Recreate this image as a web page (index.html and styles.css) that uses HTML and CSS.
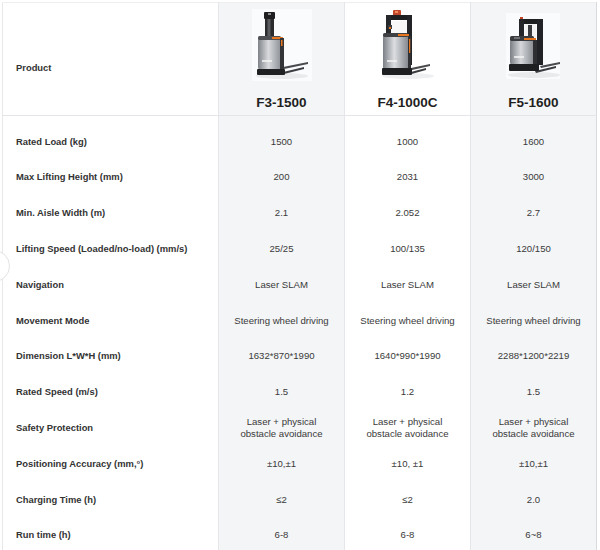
FILE: index.html
```html
<!DOCTYPE html>
<html lang="en">
<head>
<meta charset="utf-8">
<title>Product comparison</title>
<link rel="stylesheet" href="styles.css">
</head>
<body>
<div class="page">
  <span class="nav-circle" aria-hidden="true"></span>
  <table class="spec">
    <colgroup>
      <col class="c-label">
      <col class="c-prod">
      <col class="c-prod">
      <col class="c-last">
    </colgroup>
    <thead>
      <tr>
        <th class="label head-label">Product</th>
        <th class="prod alt">
          <div class="pic">
            <svg width="60" height="72" viewBox="0 0 60 72">
              <defs>
                <linearGradient id="s1" x1="0" x2="1" y1="0" y2="0">
                  <stop offset="0" stop-color="#7f8389"/>
                  <stop offset="0.45" stop-color="#d8dadd"/>
                  <stop offset="1" stop-color="#8c9096"/>
                </linearGradient>
              </defs>
              <rect width="60" height="72" fill="#fafbfc"/>
              <ellipse cx="30" cy="67" rx="26" ry="3" fill="#e9eaec"/>
              <rect x="13" y="6" width="9" height="26" fill="#2b2b2d"/>
              <rect x="15.5" y="9" width="3" height="20" fill="#5a5c60"/>
              <rect x="12" y="3" width="11" height="7" rx="1" fill="#1f1f21"/>
              <rect x="16" y="4" width="3" height="2" fill="#8a8c90"/>
              <path d="M31 58 L56 53 L56 55 L32 60 Z" fill="#4a4b4e"/>
              <path d="M27 64 L52 58 L52 60 L28 66 Z" fill="#3b3c3f"/>
              <rect x="6" y="29" width="23" height="32" rx="3" fill="url(#s1)"/>
              <rect x="6" y="27" width="23" height="4" rx="1.5" fill="#4d4f53"/>
              <rect x="20" y="28" width="11" height="2" fill="#e8761f"/>
              <rect x="28" y="29" width="4" height="32" fill="#333437"/>
              <rect x="29" y="31" width="1.5" height="6" fill="#e8761f"/>
              <rect x="10" y="51" width="10" height="2" fill="#f2f2f2" opacity="0.8"/>
              <rect x="5" y="60" width="28" height="6" rx="1" fill="#1f2022"/>
            </svg>
          </div>
          <div class="model">F3-1500</div>
        </th>
        <th class="prod">
          <div class="pic">
            <svg width="60" height="72" viewBox="0 0 60 72">
              <defs>
                <linearGradient id="s2" x1="0" x2="1" y1="0" y2="0">
                  <stop offset="0" stop-color="#7c8086"/>
                  <stop offset="0.45" stop-color="#dcdee1"/>
                  <stop offset="1" stop-color="#868a90"/>
                </linearGradient>
              </defs>
              <ellipse cx="30" cy="67" rx="26" ry="3" fill="#eeeff1"/>
              <rect x="15" y="1" width="8" height="6" rx="1" fill="#c2462a"/>
              <rect x="17" y="2" width="3" height="2" fill="#f08a5d"/>
              <rect x="8" y="6" width="25" height="5" fill="#1e1f21"/>
              <rect x="8" y="6" width="5" height="24" fill="#26272a"/>
              <rect x="29" y="6" width="5" height="50" fill="#232427"/>
              <rect x="13" y="12" width="16" height="12" fill="#f7f7f8"/>
              <rect x="10" y="16" width="4" height="4" fill="#3a3b3e"/>
              <rect x="11" y="18" width="2" height="2" fill="#e8761f"/>
              <path d="M33 59 L52 55 L52 57 L34 61 Z" fill="#4a4b4e"/>
              <path d="M29 64 L48 59 L48 61 L30 66 Z" fill="#3b3c3f"/>
              <rect x="5" y="26" width="25" height="35" rx="3" fill="url(#s2)"/>
              <rect x="5" y="24" width="25" height="4" rx="1.5" fill="#3f4044"/>
              <rect x="20" y="25" width="11" height="2" fill="#e8761f"/>
              <rect x="30" y="27" width="3" height="32" fill="#303134"/>
              <rect x="31" y="30" width="1.2" height="14" fill="#e8761f"/>
              <rect x="9" y="51" width="10" height="2" fill="#f2f2f2" opacity="0.8"/>
              <rect x="4" y="59" width="30" height="7" rx="1" fill="#1e1f21"/>
            </svg>
          </div>
          <div class="model">F4-1000C</div>
        </th>
        <th class="prod alt last">
          <div class="pic">
            <svg width="60" height="72" viewBox="0 0 60 72">
              <defs>
                <linearGradient id="s3" x1="0" x2="1" y1="0" y2="0">
                  <stop offset="0" stop-color="#7b7f85"/>
                  <stop offset="0.45" stop-color="#d6d8db"/>
                  <stop offset="1" stop-color="#85898f"/>
                </linearGradient>
              </defs>
              <rect x="2" y="4" width="54" height="66" fill="#fafbfc"/>
              <ellipse cx="30" cy="66" rx="26" ry="3" fill="#e9eaec"/>
              <rect x="15" y="10" width="24" height="5" fill="#1e1f21"/>
              <rect x="15" y="10" width="5" height="20" fill="#252629"/>
              <rect x="33" y="10" width="6" height="46" fill="#222326"/>
              <rect x="21" y="15" width="11" height="14" fill="#f4f4f5"/>
              <rect x="24" y="16" width="4" height="12" fill="#3a3b3e"/>
              <rect x="16" y="8" width="3" height="2" fill="#c2462a"/>
              <path d="M36 57 L56 53 L56 55 L37 59 Z" fill="#4a4b4e"/>
              <path d="M31 62 L52 57 L52 59 L32 64 Z" fill="#3b3c3f"/>
              <rect x="6" y="30" width="24" height="26" rx="3" fill="url(#s3)"/>
              <rect x="6" y="27" width="24" height="5" rx="1.5" fill="#3a3b3f"/>
              <rect x="10" y="28" width="6" height="2" fill="#6d6f73"/>
              <rect x="20" y="29" width="12" height="2" fill="#e8761f"/>
              <rect x="29" y="31" width="4" height="25" fill="#2e2f32"/>
              <rect x="10" y="47" width="10" height="2" fill="#f2f2f2" opacity="0.8"/>
              <rect x="5" y="55" width="30" height="7" rx="1" fill="#1e1f21"/>
            </svg>
          </div>
          <div class="model">F5-1600</div>
        </th>
      </tr>
    </thead>
    <tbody>
      <tr class="first">
        <td class="label">Rated Load (kg)</td>
        <td class="alt">1500</td><td>1000</td><td class="alt last">1600</td>
      </tr>
      <tr>
        <td class="label">Max Lifting Height (mm)</td>
        <td class="alt">200</td><td>2031</td><td class="alt last">3000</td>
      </tr>
      <tr>
        <td class="label">Min. Aisle Width (m)</td>
        <td class="alt">2.1</td><td>2.052</td><td class="alt last">2.7</td>
      </tr>
      <tr>
        <td class="label">Lifting Speed (Loaded/no-load) (mm/s)</td>
        <td class="alt">25/25</td><td>100/135</td><td class="alt last">120/150</td>
      </tr>
      <tr>
        <td class="label">Navigation</td>
        <td class="alt">Laser SLAM</td><td>Laser SLAM</td><td class="alt last">Laser SLAM</td>
      </tr>
      <tr>
        <td class="label">Movement Mode</td>
        <td class="alt">Steering wheel driving</td><td>Steering wheel driving</td><td class="alt last">Steering wheel driving</td>
      </tr>
      <tr>
        <td class="label">Dimension L*W*H (mm)</td>
        <td class="alt">1632*870*1990</td><td>1640*990*1990</td><td class="alt last">2288*1200*2219</td>
      </tr>
      <tr>
        <td class="label">Rated Speed (m/s)</td>
        <td class="alt">1.5</td><td>1.2</td><td class="alt last">1.5</td>
      </tr>
      <tr>
        <td class="label">Safety Protection</td>
        <td class="alt">Laser + physical<br>obstacle avoidance</td><td>Laser + physical<br>obstacle avoidance</td><td class="alt last">Laser + physical<br>obstacle avoidance</td>
      </tr>
      <tr>
        <td class="label">Positioning Accuracy (mm,°)</td>
        <td class="alt">±10,±1</td><td>±10, ±1</td><td class="alt last">±10,±1</td>
      </tr>
      <tr>
        <td class="label">Charging Time (h)</td>
        <td class="alt">≤2</td><td>≤2</td><td class="alt last">2.0</td>
      </tr>
      <tr>
        <td class="label">Run time (h)</td>
        <td class="alt">6-8</td><td>6-8</td><td class="alt last">6~8</td>
      </tr>
    </tbody>
  </table>
</div>
</body>
</html>
```
FILE: styles.css
```css
html, body {
  margin: 0;
  padding: 0;
  background: #ffffff;
}

.page {
  position: relative;
  padding: 2px 0 0 2px;
  font-family: "Liberation Sans", Arial, sans-serif;
  color: #3a3a3a;
  overflow: hidden;
  height: 548px;
}

.nav-circle {
  position: absolute;
  left: -22px;
  top: 250px;
  width: 30px;
  height: 30px;
  border: 1px solid #e2e3e5;
  border-radius: 50%;
  background: #ffffff;
  z-index: 2;
}

.spec {
  border-collapse: collapse;
  table-layout: fixed;
  width: 594px;
  border-top: 1px solid #eceef0;
  border-left: 1px solid #e6e8ea;
}

.c-label { width: 216px; }
.c-prod { width: 126px; }
.c-last { width: 126px; }

.spec th,
.spec td {
  border-left: 1px solid #e4e6e9;
  padding: 0 4px;
  text-align: center;
  vertical-align: middle;
  font-size: 9.6px;
  line-height: 11.5px;
  font-weight: normal;
  color: #3a3a3a;
}

.spec .last {
  border-right: 1px solid #d9dbde;
}

.spec .alt {
  background: #f4f5f7;
}

.spec .label {
  text-align: left;
  padding-left: 13px;
  font-size: 9.4px;
  font-weight: bold;
  color: #333;
  border-left: none;
}

.spec thead tr {
  height: 113px;
}

.spec thead th {
  border-bottom: 1px solid #e3e5e8;
}

.spec .head-label {
  padding-top: 17px;
}

.spec .prod {
  vertical-align: top;
  padding-top: 6px;
}

.pic {
  display: flex;
  justify-content: center;
  height: 72px;
}

.pic svg {
  display: block;
}

.model {
  margin-top: 14px;
  font-size: 13.5px;
  line-height: 16px;
  font-weight: bold;
  color: #1f1f1f;
}

.spec tbody tr {
  height: 35.8px;
}

.spec tbody tr.first {
  height: 43.8px;
}

.spec tbody tr.first td {
  padding-top: 8px;
}
```
